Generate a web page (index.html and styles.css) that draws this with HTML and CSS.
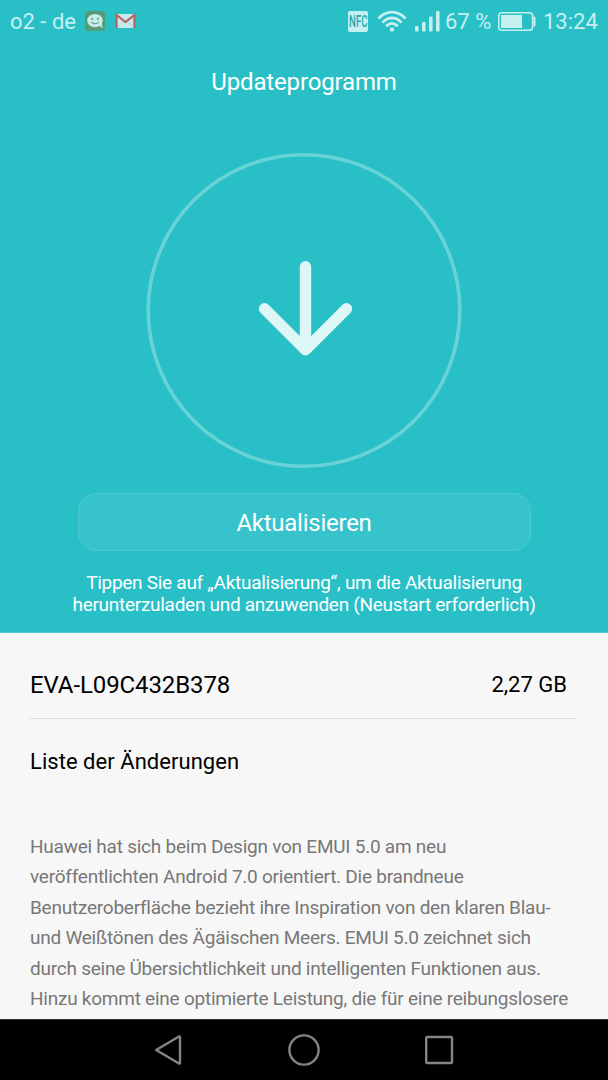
FILE: index.html
```html
<!DOCTYPE html>
<html lang="de">
<head>
    <meta charset="UTF-8">
    <meta name="viewport" content="width=device-width, initial-scale=1.0">
    <title>Updateprogramm</title>
    <link rel="stylesheet" href="styles.css">
</head>
<body>
    <div class="screen">
        <div class="top">
            <div class="statusbar">
                <span class="carrier">o2 - de</span>
                <svg class="sms" width="20" height="20" viewBox="0 0 20 20">
                    <rect width="20" height="20" rx="3" fill="#549c75"/>
                    <ellipse cx="10" cy="9.6" rx="7.8" ry="6.7" fill="#c5eeea"/>
                    <path d="M13 14l4.5 3-.7-5z" fill="#c5eeea"/>
                    <circle cx="7.2" cy="7.8" r="1" fill="#549c75"/>
                    <circle cx="12.8" cy="7.8" r="1" fill="#549c75"/>
                    <path d="M6 11q4 3.6 8 0" fill="none" stroke="#549c75" stroke-width="1"/>
                </svg>
                <svg class="gmail" width="21" height="16" viewBox="0 0 21 16">
                    <rect x="1" y="1" width="19" height="14" rx="1" fill="#c7eceb"/>
                    <path d="M3 14l6-6M18 14l-6-6" stroke="#a5d5d5" stroke-width="1"/>
                    <path d="M1.6 15V2l8.9 7.2L19.4 2v13" fill="none" stroke="#b8655f" stroke-width="2.2"/>
                </svg>
                <span class="space"></span>
                <span class="nfc"><span>NFC</span></span>
                <svg class="wifi" width="30" height="23" viewBox="0 0 30 23">
                    <g fill="none" stroke="#c6eff0" stroke-width="2.8">
                        <path d="M1.5 8.6Q7.5 2.2 15 2.2T28.5 8.6"/>
                        <path d="M5.5 12.7Q9.6 8 15 8T24.5 12.7"/>
                        <path d="M9.3 16.5Q11.6 13.4 15 13.4T20.7 16.5"/>
                    </g>
                    <circle cx="15" cy="19.5" r="2.2" fill="#c6eff0"/>
                </svg>
                <svg class="signal" width="25" height="21" viewBox="0 0 25 21" fill="#c6eff0">
                    <rect x="0" y="15" width="3.6" height="5.5" rx="1"/>
                    <rect x="7" y="11" width="3.6" height="9.5" rx="1"/>
                    <rect x="14" y="5.5" width="3.6" height="15" rx="1"/>
                    <rect x="21" y="0" width="3.6" height="20.5" rx="1"/>
                </svg>
                <span class="percent">67 %</span>
                <svg class="battery" width="38" height="19" viewBox="0 0 38 19">
                    <rect x=".8" y=".8" width="33.8" height="17.4" rx="3" fill="none" stroke="#c6eff0" stroke-width="1.6"/>
                    <rect x="3" y="3" width="21" height="13" fill="#c6eff0"/>
                    <path d="M35.5 4.500h.7q1.300 0 1.300 1.300v7.400q0 1.300-1.300 1.300h-.7z" fill="#c6eff0"/>
                </svg>
                <span class="clock">13:24</span>
            </div>

            <h1 class="title">Updateprogramm</h1>

            <svg class="download" width="316" height="317" viewBox="0 0 316 317">
                <circle cx="158" cy="158.5" r="155.8" fill="none" stroke="#68d3d7" stroke-width="3.6"/>
                <path d="M159.5 114.7V197.700M118.500 156.700l41 41 41-41" fill="none" stroke="#ddf6f6" stroke-width="11.4" stroke-linecap="round" stroke-linejoin="round"/>
            </svg>

            <button class="update">Aktualisieren</button>
            <p class="hint">Tippen Sie auf „Aktualisierung“, um die Aktualisierung<br>herunterzuladen und anzuwenden (Neustart erforderlich)</p>
        </div>

        <div class="details">
            <div class="version">
                <span class="build">EVA-L09C432B378</span>
                <span class="size">2,27 GB</span>
            </div>
            <h2 class="changes">Liste der Änderungen</h2>
            <p class="log">
                Huawei hat sich beim Design von EMUI 5.0 am neu<br>
                veröffentlichten Android 7.0 orientiert. Die brandneue<br>
                Benutzeroberfläche bezieht ihre Inspiration von den klaren Blau-<br>
                und Weißtönen des Ägäischen Meers. EMUI 5.0 zeichnet sich<br>
                durch seine Übersichtlichkeit und intelligenten Funktionen aus.<br>
                Hinzu kommt eine optimierte Leistung, die für eine reibungslosere
            </p>
        </div>

        <div class="navbar">
            <svg width="32" height="32" viewBox="0 0 32 32"><path d="M3.2 16L26 2.500q1-.4 1 .5v26q0 .9-1 .5z"/></svg>
            <svg width="32" height="32" viewBox="0 0 32 32"><circle cx="16" cy="16" r="14.6"/></svg>
            <svg width="32" height="32" viewBox="0 0 32 32"><rect x="3.2" y="3" width="25.8" height="26" rx="1"/></svg>
        </div>
    </div>
</body>
</html>
```
FILE: styles.css
```css
*{
    box-sizing: border-box;
}

body{
    margin: 0;
    font-family: Roboto, sans-serif;
    background-color: #000;
}

.screen{
    display: flex;
    flex-direction: column;
    height: 1080px;
    overflow: hidden;
}

.top{
    display: flex;
    flex-direction: column;
    align-items: center;
    flex: none;
    height: 633px;
    background-color: #29bfc7;
    border-bottom: 1px solid #4cc7ce;
    color: #fff;
}

.statusbar{
    display: flex;
    align-items: center;
    width: 100%;
    height: 42px;
    padding: 0 10px;
    font-size: 22px;
    color: #c6eff0;
    white-space: nowrap;
}
.carrier{
    width: 75px;
}
.gmail{
    margin-left: 10px;
}
.space{
    flex: 1;
}
.nfc{
    display: flex;
    justify-content: center;
    align-items: center;
    width: 20px;
    height: 21px;
    border-radius: 2px;
    background-color: #c6eff0;
    color: #29aab1;
    font-size: 16px;
    font-weight: 500;
}
.nfc span{
    transform: scaleX(0.6);
}
.wifi{
    margin-left: 9px;
}
.signal{
    margin-left: 8px;
}
.percent{
    width: 53px;
    margin-left: 5px;
}
.clock{
    width: 55px;
    margin-left: 7px;
}

.title{
    margin: 24px 0 0;
    font-size: 24px;
    line-height: 32px;
    font-weight: normal;
    letter-spacing: -0.15px;
}
.download{
    flex: none;
    margin-top: 54px;
}

.update{
    flex: none;
    width: 453px;
    height: 58px;
    margin: 24px 0 0;
    padding: 2px 0 0;
    border: 1px solid #4dcbd1;
    border-radius: 18px;
    background-color: #36c3cb;
    color: #fff;
    font-family: inherit;
    font-size: 24px;
    letter-spacing: -0.25px;
}
.hint{
    margin: 21px 0 0;
    font-size: 19px;
    line-height: 22px;
    letter-spacing: -0.28px;
    text-align: center;
    white-space: nowrap;
}

.details{
    flex: 1;
    min-height: 0;
    padding: 0 31px 0 30px;
    background-color: #f7f7f7;
    color: #000;
    overflow: hidden;
}
.version{
    display: flex;
    justify-content: space-between;
    align-items: center;
    height: 86px;
    padding: 18px 10px 0 0;
    border-bottom: 1px solid #dfdfdf;
}
.build{
    font-size: 24px;
    letter-spacing: -0.1px;
}
.size{
    font-size: 22px;
}
.changes{
    margin: 27px 0 0;
    font-size: 22px;
    line-height: 32px;
    font-weight: normal;
    letter-spacing: 0.04px;
}
.log{
    margin: 54px 0 0;
    font-size: 19px;
    line-height: 30.4px;
    letter-spacing: -0.24px;
    color: #777;
    white-space: nowrap;
}

.navbar{
    display: flex;
    flex: none;
    justify-content: center;
    align-items: center;
    gap: 103px;
    height: 61px;
    border-top: 1px solid #333;
    background-color: #000;
}
.navbar svg{
    fill: none;
    stroke: #848484;
    stroke-width: 2.4;
    stroke-linejoin: round;
}
```
